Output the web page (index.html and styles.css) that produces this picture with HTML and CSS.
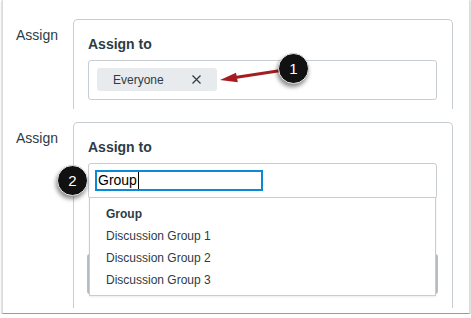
FILE: index.html
```html
<!DOCTYPE html>
<html lang="en">

<head>
    <meta charset="UTF-8">
    <meta name="viewport" content="width=device-width, initial-scale=1.0">
    <title>Assign to</title>
    <link rel="stylesheet" href="styles.css">
</head>

<body>
    <div class="frame">
        <div class="row">
            <div class="label">Assign</div>
            <div class="card">
                <div class="title">Assign to</div>
                <div class="field chips">
                    <span class="chip">Everyone
                        <svg class="chip-x" width="9" height="9" viewBox="0 0 9 9">
                            <path d="M0.5 0.5 L8.5 8.5 M8.5 0.5 L0.5 8.5" stroke="#2d3b45" stroke-width="1.2" />
                        </svg>
                    </span>
                    <svg class="arrow" width="70" height="26" viewBox="0 0 70 26">
                        <line x1="20" y1="14.6" x2="66" y2="7.6" stroke="#a51d21" stroke-width="3" />
                        <polygon points="5,17 22.8,19.2 21,9.8" fill="#a51d21" />
                    </svg>
                    <span class="badge badge-1">1</span>
                </div>
            </div>
        </div>

        <div class="row row-open">
            <div class="label">Assign</div>
            <div class="card">
                <div class="title">Assign to</div>
                <div class="field search">
                    <span class="badge badge-2">2</span>
                    <div class="focus">Group<span class="caret"></span></div>
                    <ul class="menu">
                        <li class="menu-head">Group</li>
                        <li>Discussion Group 1</li>
                        <li>Discussion Group 2</li>
                        <li>Discussion Group 3</li>
                    </ul>
                </div>
                <div class="field hidden-field"></div>
            </div>
        </div>
    </div>
</body>

</html>
```

FILE: styles.css
```css
body {
    margin: 0;
    background: #ffffff;
    font-family: "Liberation Sans", Arial, sans-serif;
    color: #2d3b45;
}

.frame {
    display: flex;
    flex-direction: column;
    gap: 13px;
    margin: 0 1px 0 2px;
    height: 314px;
    box-sizing: border-box;
    padding: 19px 0 5px;
    border-left: 1px solid #dcdcdc;
    border-right: 1px solid #dcdcdc;
    border-bottom: 1px solid #9a9a9a;
    box-shadow: 0 1px 2px rgba(0, 0, 0, 0.35);
}

.row {
    display: flex;
}

.row-open {
    flex: 1;
}

.label {
    flex: none;
    width: 70px;
    padding: 8px 0 0 13px;
    box-sizing: border-box;
    font-size: 14px;
    line-height: 16px;
}

.card {
    flex: 1;
    margin-right: 16px;
    padding: 16px 15px 9px 14px;
    border: 1px solid #c7cdd1;
    border-bottom: none;
    border-radius: 5px 5px 0 0;
}

.title {
    font-size: 14px;
    font-weight: bold;
    line-height: 16px;
    margin-bottom: 8px;
}

.field {
    position: relative;
    border: 1px solid #c7cdd1;
    border-radius: 3px;
}

.chips {
    padding: 7px 8px 8px;
}

.chip {
    display: inline-flex;
    align-items: center;
    height: 23px;
    padding: 0 16px;
    background: #e8ebed;
    border-radius: 3px;
    font-size: 12px;
}

.chip-x {
    margin-left: 28px;
}

.arrow {
    position: absolute;
    left: 126px;
    top: 2px;
}

.badge {
    position: absolute;
    width: 29px;
    height: 29px;
    border-radius: 50%;
    background: #111111;
    border: 1px solid #e6e6e6;
    box-shadow: -1px 3px 4px rgba(0, 0, 0, 0.45);
    color: #ffffff;
    font-size: 15px;
    line-height: 29px;
    text-align: center;
}

.badge-1 {
    left: 189px;
    top: -8px;
}

.badge-2 {
    left: -32px;
    top: 1px;
}

.search {
    padding: 6px 6px 7px;
}

.focus {
    width: 163px;
    height: 17px;
    border: 2px solid #0a8ad6;
    font-size: 14px;
    line-height: 17px;
    color: #000000;
    padding-left: 1px;
}

.caret {
    display: inline-block;
    width: 1px;
    height: 17px;
    background: #000000;
    vertical-align: top;
    margin-left: 1px;
}

.menu {
    position: absolute;
    top: calc(100% - 1px);
    left: 0;
    right: 0;
    margin: 0;
    padding: 5px 0 4px;
    list-style: none;
    background: #ffffff;
    border: 1px solid #c7cdd1;
    box-shadow: 0 1px 2px rgba(0, 0, 0, 0.08);
    z-index: 2;
}

.menu li {
    padding-left: 16px;
    font-size: 12px;
    line-height: 22px;
}

.menu .menu-head {
    font-weight: bold;
}

.hidden-field {
    margin: 55px -1px 0;
    height: 38px;
    border-color: #b9bfc3;
    border-width: 1px 2px;
}
```
